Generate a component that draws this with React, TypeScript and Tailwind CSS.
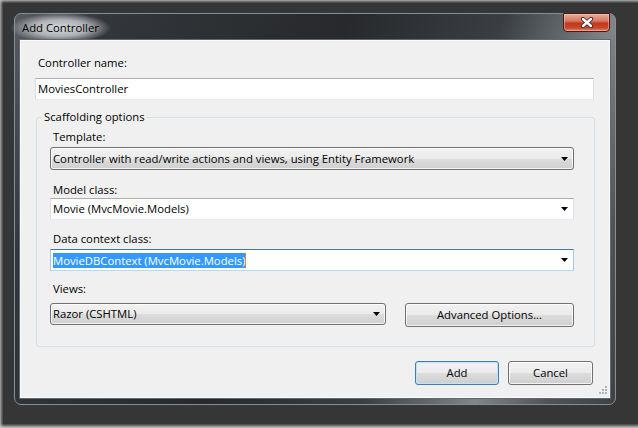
import React from 'react';

const font = "font-['Open_Sans','Noto_Sans',sans-serif] text-[11.3px] text-black";

const btnFace =
  'bg-[linear-gradient(#f2f2f2_0%,#ebebeb_50%,#dddddd_50%,#cfcfcf_100%)] border border-[#707070] rounded-[3px] shadow-[inset_0_0_0_1px_rgba(255,255,255,0.75)]';

const Arrow = () => (
  <svg width="7" height="4" viewBox="0 0 7 4" className="shrink-0">
    <path d="M0 0H7L3.5 4Z" fill="#000" />
  </svg>
);

const Label: React.FC<{ text: string; className?: string }> = ({ text, className = '' }) => (
  <div className={`h-[16px] leading-[16px] pl-[3px] ${className}`}>{text}</div>
);

const ButtonCombo: React.FC<{ value: string; className?: string }> = ({ value, className = '' }) => (
  <div className={`${btnFace} h-[23px] flex items-center pl-[2px] pr-[5px] ${className}`}>
    <span className="flex-1 leading-[16px]">{value}</span>
    <Arrow />
  </div>
);

const Button: React.FC<{ text: string; className?: string; isDefault?: boolean }> = ({
  text,
  className = '',
  isDefault,
}) => (
  <div
    className={`h-[24px] flex items-center justify-center rounded-[3px] bg-[linear-gradient(#f2f2f2_0%,#ebebeb_50%,#dddddd_50%,#cfcfcf_100%)] ${
      isDefault
        ? 'border border-[#3c7fb1] shadow-[inset_0_0_0_1px_#bfe3f9]'
        : 'border border-[#707070] shadow-[inset_0_0_0_1px_rgba(255,255,255,0.75)]'
    } ${className}`}
  >
    {text}
  </div>
);

export default function App() {
  return (
    <div className="w-[638px] h-[428px] bg-[#d2d2d2] pl-[3px] pt-[3px] pb-[4px] overflow-hidden">
      <div className="w-full h-full bg-[#363636] shadow-[0_0_3px_2px_#363636] pl-[11px] pt-[10px]">
        {/* window */}
        <div className="w-[602px] h-[392px] rounded-[7px] border border-[#8a8e92] flex flex-col px-[5px] pb-[6px] bg-[linear-gradient(110deg,#585c60_0%,#33363a_12%,#27292c_45%,#3a3e42_66%,#80858a_81%,#4e5357_91%,#3e4246_100%)]">
          <div className={`h-[26px] flex items-start ${font}`}>
            <div className="-ml-[10px] -mt-[1px] px-[12px] py-[7px] leading-[16px] font-medium bg-[radial-gradient(closest-side,rgba(222,225,228,0.95)_0%,rgba(200,204,208,0.8)_55%,rgba(120,124,128,0)_100%)]">
              Add Controller
            </div>
            <div className="ml-auto -mt-px w-[47px] h-[19px] rounded-b-[4px] border border-[#4a1a12] flex items-center justify-center bg-[linear-gradient(#e9ab9a_0%,#d77a63_40%,#c23a1c_55%,#c8442a_80%,#dc8670_100%)] shadow-[inset_0_0_0_1px_rgba(255,200,190,0.5)]">
              <svg width="14" height="11" viewBox="0 0 14 11">
                <path d="M3 2L11 9M11 2L3 9" stroke="#3b2a28" strokeWidth="4.2" strokeLinecap="round" />
                <path d="M3 2L11 9M11 2L3 9" stroke="#fff" strokeWidth="2.4" strokeLinecap="round" />
              </svg>
            </div>
          </div>

          {/* client area */}
          <div
            className={`relative flex-1 bg-[#f0f0f0] shadow-[0_0_0_1px_#62676c,inset_0_0_0_1px_#fbfbfb] flex flex-col pl-[15px] pr-[16px] pt-[15px] ${font}`}
          >
            <Label text="Controller name:" />
            <div className="mt-[7px] h-[22px] bg-white border border-[#dbdfe6] border-t-[#abadb3] border-b-[#e3e9ef] flex items-center pl-[2px] leading-[16px]">
              MoviesController
            </div>

            <fieldset className="mt-[9px] ml-px w-[559px] border border-[#d5dfe5] rounded-[3px]">
              <legend className="ml-[5px] px-[2px] leading-[16px]">Scaffolding options</legend>
              <div className="flex flex-col pl-[13px] pr-[20px] pt-[4px] pb-[19px]">
                <Label text="Template:" />
                <ButtonCombo
                  className="mt-[2px]"
                  value="Controller with read/write actions and views, using Entity Framework"
                />

                <Label text="Model class:" className="mt-[12px]" />
                <div className="h-[22px] bg-white border border-[#dbdfe6] border-t-[#abadb3] border-b-[#e3e9ef] flex items-center pl-[2px] pr-[5px]">
                  <span className="flex-1 leading-[16px]">Movie (MvcMovie.Models)</span>
                  <Arrow />
                </div>

                <Label text="Data context class:" className="mt-[11px]" />
                <div className="mt-[2px] h-[22px] bg-white border border-[#a4c9e3] border-t-[#3d7bad] border-b-[#b7d9ed] flex items-center pl-[2px] pr-[5px]">
                  <span className="flex-1 flex">
                    <span className="bg-[#3399ff] text-white leading-[15px] border-r border-r-[#e07a2a]">
                      MovieDBContext (MvcMovie.Models)
                    </span>
                  </span>
                  <Arrow />
                </div>

                <Label text="Views:" className="mt-[10px]" />
                <div className="mt-[6px] flex items-start gap-[19px]">
                  <ButtonCombo className="w-[336px] !h-[22px]" value="Razor (CSHTML)" />
                  <Button text="Advanced Options..." className="w-[169px]" />
                </div>
              </div>
            </fieldset>

            <div className="mt-[14px] pr-px flex justify-end gap-[9px]">
              <Button text="Add" className="w-[84px]" isDefault />
              <Button text="Cancel" className="w-[85px]" />
            </div>

            <svg className="absolute right-[3px] bottom-[4px]" width="8" height="8" viewBox="0 0 8 8">
              <g fill="#b4b4b4">
                <rect x="6" y="0" width="2" height="2" />
                <rect x="3" y="3" width="2" height="2" />
                <rect x="6" y="3" width="2" height="2" />
                <rect x="0" y="6" width="2" height="2" />
                <rect x="3" y="6" width="2" height="2" />
                <rect x="6" y="6" width="2" height="2" />
              </g>
            </svg>
          </div>
        </div>
      </div>
    </div>
  );
}
